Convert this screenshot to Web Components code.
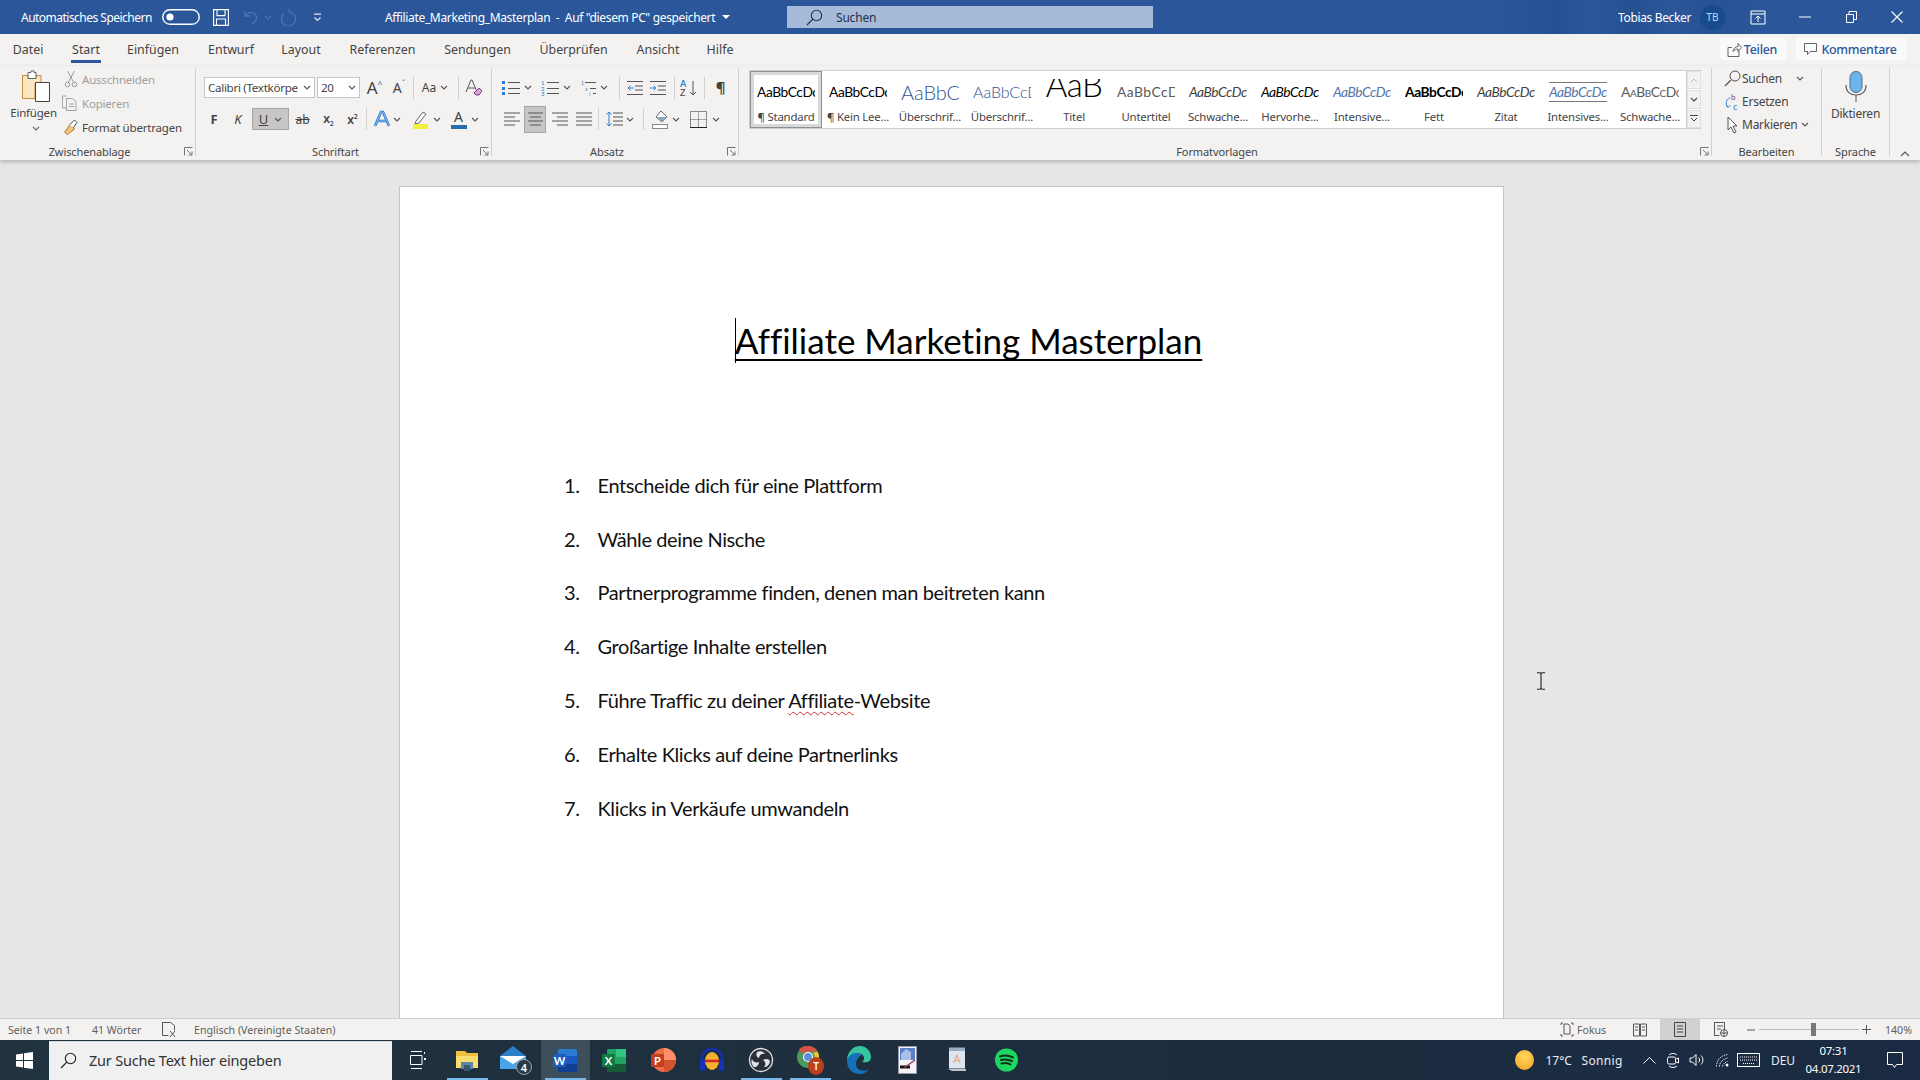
<!DOCTYPE html>
<html lang="de"><head><meta charset="utf-8"><title>Word</title>
<style>
html,body{margin:0;padding:0;width:1920px;height:1080px;overflow:hidden}
body{font-family:"Noto Sans","Open Sans",sans-serif;display:flex;flex-direction:column;background:#e6e6e6}
</style></head><body>
<w-titlebar></w-titlebar>
<w-tabs></w-tabs>
<w-ribbon></w-ribbon>
<w-doc></w-doc>
<w-status></w-status>
<w-taskbar></w-taskbar>
<script>
const UI='"Noto Sans","Open Sans",sans-serif', CAL='Lato,"Open Sans",sans-serif';
function def(tag,css,html){customElements.define(tag,class extends HTMLElement{constructor(){super();
 const h=typeof html==='function'?html(this):html;
 this.attachShadow({mode:'open'}).innerHTML=`<style>:host{display:block}${SH}${css}</style>${h}`;}});}
const SH=`.row{display:flex;align-items:center}.c{display:flex;align-items:center;justify-content:center;flex:none;white-space:nowrap}.l{display:flex;align-items:center;flex:none;white-space:nowrap}svg{display:block;flex:none}`;
function row(start,items,st=''){let p=start,o='';for(const it of items){const [x,w,h,k='c',e='']=it;o+=`<span class="${k}" style="margin-left:${x-p}px;width:${w}px;${e}">${h}</span>`;p=x+w;}return `<div class="row" style="${st}">${o}</div>`;}
const svg=(w,h,b,e='')=>`<svg width="${w}" height="${h}" viewBox="0 0 ${w} ${h}" fill="none" ${e}>${b}</svg>`;
const chev=(c='#555')=>svg(8,5,`<path d="M1 1l3 3 3-3" stroke="${c}" stroke-width="1.1"/>`);
const launcher=svg(9,9,`<path d="M.5 8.500v-8h8M3 3l5 5M4.500 8h3.500V4.500" stroke="#666" stroke-width=".9"/>`);

/* ---------- title bar ---------- */
def('w-titlebar',`:host{height:34px;background:linear-gradient(90deg,transparent 78%,rgba(10,40,90,.14) 81%,transparent 83%,rgba(10,40,90,.16) 85%,transparent 87%,rgba(10,40,90,.12) 89%,transparent 92%),#2b579a;color:#fff;font-size:12px;flex:none}
.row{height:34px}.s{height:22px;background:#a6bbd9;color:#1f2f4a;font-size:12px}
.av{height:25px;border-radius:50%;background:#174b8c;color:#c8d8ee;font-size:10px;letter-spacing:.3px}`,
row(0,[
[21,135,'Automatisches Speichern','l','letter-spacing:-.52px'],
[162,38,svg(38,16,`<rect x=".75" y=".75" width="36.5" height="14.5" rx="7.25" stroke="#fff" stroke-width="1.4"/><circle cx="8" cy="8" r="3.6" fill="#fff"/>`)],
[213,16,svg(16,17,`<path d="M.6.6h14.800v15.800H.6zM4 .6v6h8v-6M3.500 16.400V10h9v6.400" stroke="#fff" stroke-width="1.1"/>`)],
[242,17,svg(17,17,`<path d="M3 2v5h5M3.300 7C5 3.500 10 2 13 5c3 3 2 7-3 10" stroke="#4f74ad" stroke-width="1.3"/>`)],
[264,7,chev('#4f74ad')],
[280,17,svg(17,17,`<path d="M9 3a7 7 0 1 1-5 1.600M9 3V.6" stroke="#4f74ad" stroke-width="1.3"/>`)],
[313,9,svg(9,9,`<path d="M1 1.200h7M1.500 4.500l3 3 3-3" stroke="#dfe7f2" stroke-width="1.2"/>`)],
[385,333,'Affiliate_Marketing_Masterplan&nbsp; - &nbsp;Auf "diesem PC" gespeichert','l','letter-spacing:-.35px'],
[722,8,svg(8,4,`<path d="M0 0h8L4 4z" fill="#fff"/>`)],
[787,366,`<span style="margin-left:19px">${svg(17,17,`<circle cx="10.500" cy="6.500" r="5.200" stroke="#25324a" stroke-width="1.100"/><path d="M6.800 10.200L1 16" stroke="#25324a" stroke-width="1.200"/>`)}</span><span style="margin-left:13px;letter-spacing:-.2px">Suchen</span>`,'l s'],
[1618,72,'Tobias Becker','l','letter-spacing:-.35px'],
[1700,25,'TB','c av'],
[1750,16,svg(16,15,`<path d="M1 1h14v13H1zM1 4h14M8 12V6M5.500 8.500L8 6l2.500 2.500" stroke="#fff" stroke-width="1"/>`)],
[1799,12,svg(12,2,`<path d="M0 1h12" stroke="#fff"/>`)],
[1846,11,svg(11,12,`<path d="M.5 3.500h7v8h-7zM3 3.500V.5h7.500v8H7.500" stroke="#fff"/>`)],
[1891,12,svg(12,12,`<path d="M.5.5l11 11M11.500.5L.5 11.500" stroke="#fff" stroke-width="1.100"/>`)],
]));

/* ---------- tabs ---------- */
def('w-tabs',`:host{height:32px;background:#f3f2f1;color:#444;font-size:12.4px;flex:none}
.row{height:30px}.b{height:22px;background:#fafafa;color:#2b579a;font-weight:500;border-radius:2px;font-size:12.4px;letter-spacing:-.25px;padding-right:2px;box-sizing:border-box}
.u{position:relative;height:30px}.u::after{content:"";position:absolute;left:0;right:0;top:26px;height:2.500px;background:#2b579a}`,
row(0,[[13,30,'Datei'],[71,30,'Start','c u'],[128,50,'Einfügen'],[209,44,'Entwurf'],[282,38,'Layout'],[350,65,'Referenzen'],[445,65,'Sendungen'],[540,67,'Überprüfen'],[637,42,'Ansicht'],[707,26,'Hilfe'],
[1720,66,`${svg(15,15,`<path d="M1 5.500h4M1 5.500v9h11V9M6 9.500C6.500 6 9 4.500 11 4.500V1.500l3.500 4-3.500 4V7C9 7 7.500 8 6 9.500z" stroke="#555" stroke-width=".9"/>`,'style="margin-right:2px"')}Teilen`,'c b'],
[1796,111,`${svg(14,14,`<path d="M.5 1.500h12v8H6L3.500 12.500V9.500h-3z" stroke="#555" stroke-width=".9"/>`,'style="margin-right:3px"')}Kommentare`,'c b']]));

/* ---------- group ---------- */
customElements.define('w-group',class extends HTMLElement{constructor(){super();
 const L=this.getAttribute('label'),w=this.getAttribute('w'),la=this.hasAttribute('launcher');
 this.attachShadow({mode:'open'}).innerHTML=`<style>:host{display:block;flex:none;width:${w}px;height:88px;margin-top:2px;border-right:1px solid #d2d0ce;color:#444}
 .body{height:75px;display:flow-root}.lab{height:17px;display:flex;align-items:center;justify-content:center;font-size:11px;color:#444;padding-right:${la?16:0}px;letter-spacing:-.1px;position:relative}
 .la{position:absolute;right:2px;top:4px;display:block}svg{display:block}</style><div class="body"><slot></slot></div><div class="lab">${L}${la?`<span class="la">${launcher}</span>`:''}</div>`;}});

/* ---------- clipboard ---------- */
def('w-clipboard',`:host{font-size:11.5px;letter-spacing:-.2px}
.grid{display:flex}.paste{padding:2px 0 0 10px;display:flex;flex-direction:column;align-items:center;width:47px;font-size:11.5px}
.paste span{margin-top:2px;height:18px;line-height:18px;white-space:nowrap}.paste svg:first-child{margin-left:4px}
.col{margin:-1px 0 0 7px}.col .it{display:flex;align-items:center;height:24px;white-space:nowrap}.it svg{margin-right:4px}.d{color:#a19f9d}`,
`<div class="grid"><div class="paste">
${svg(30,32,`<path d="M1.500 5.500H7v3h8v-3h5v8h-6v15H1.500z" fill="#fbe6c4" stroke="#c88a3c"/><path d="M7 2.500h3V1h3v1.500h2v6H7z" fill="#fff" stroke="#666"/><path d="M14.500 12.500h14v19h-14z" fill="#fff" stroke="#444"/>`)}
<span>Einfügen</span><span style="margin-top:0;height:12px;display:flex;align-items:center">${chev('#666')}</span></div>
<div class="col">
<div class="it d">${svg(14,18,`<path d="M3.500 1l6 11M10.500 1l-6 11" stroke="#9a9a9a"/><circle cx="3.500" cy="14.500" r="2.300" stroke="#9a9a9a"/><circle cx="10.500" cy="14.500" r="2.300" stroke="#9a9a9a"/>`)}Ausschneiden</div>
<div class="it d"><span style="margin-left:-2px"></span>${svg(16,16,`<path d="M4.500 1h-4v12h4M4.500 3.500h6l3.500 3v9H4.500z" stroke="#a5a5a5"/><path d="M7 9h5M7 11.500h5" stroke="#a5a5a5"/>`)}Kopieren</div>
<div class="it"><span style="margin-left:-1px"></span>${svg(15,16,`<path d="M1.500 13l2-2 3-5 5 4-4 3-3 2.500z" fill="#f6c878" stroke="#a8703c"/><path d="M6.500 6l5-5 2.500 2.500-4 5.500" fill="#fff" stroke="#555"/>`)}Format übertragen</div>
</div></div>`);

/* ---------- font ---------- */
def('w-font',`:host{font-size:12px}
.r1{height:21px;margin-top:9px}.r2{height:22px;margin-top:10px}
.box{height:21px;box-sizing:border-box;background:#fff;border:1px solid #c8c6c4;justify-content:space-between;padding:0 3px;font-size:11.6px;letter-spacing:-.3px;overflow:hidden}
.sep{height:22px;background:#d2d0ce}.u{background:#c8c6c4;border:1px solid #a8a6a4;box-sizing:border-box;height:22px}`,
row(196,[
[204,111,`Calibri (Textkörpe ${chev()}`,'l box'],[317,43,`20 ${chev()}`,'l box'],
[367,15,`<span style="font-size:17px">A</span><sup style="font-size:8px;margin:-8px 0 0;color:#2b579a">^</sup>`],
[392,14,`<span style="font-size:14px">A</span><sup style="font-size:8px;margin:-8px 0 0;color:#2b7cd3">ˇ</sup>`],
[413,1,'','c sep'],[420,18,'Aa'],[440,8,chev()],[458,1,'','c sep'],
[465,17,svg(17,17,`<path d="M1 13L6 1h1l5 12M3 9h7" stroke="#555"/><path d="M9 14l5-5 3 3-3 4h-3z" fill="#d9a5d9" stroke="#8a3a8a"/>`)],
]).replace('class="row" style=""','class="row r1"')+
row(196,[
[208,12,`<b style="font-size:13px">F</b>`],[232,12,`<i style="font-size:13px">K</i>`],
[252,37,`<span style="text-decoration:underline;font-size:13px;margin-right:6px">U</span>${chev()}`,'c u'],
[295,15,`<span style="font-size:12px;text-decoration:line-through">ab</span>`],
[322,13,`<b style="font-size:12px;font-weight:600">x<sub style="font-size:7px;color:#2b579a">2</sub></b>`],
[346,13,`<b style="font-size:12px;font-weight:600">x<sup style="font-size:7px;line-height:0">2</sup></b>`],
[366,1,'','c sep'],
[373,18,svg(18,18,`<path d="M2 16L8 2h2l6 14M5 11h8" stroke="#2b7cd3" stroke-width="2.600"/><path d="M2 16L8 2h2l6 14M5 11h8" stroke="#cfe6f8" stroke-width=".6"/>`)],
[393,8,chev()],
[412,17,svg(17,20,`<path d="M4 12l7-9 3 2-7 9-4 1z" fill="#fff" stroke="#666"/><rect x="1" y="15" width="15" height="5" fill="#f5f03c"/>`)],
[433,8,chev()],
[450,17,`<span style="display:flex;flex-direction:column;align-items:center;line-height:14px;font-size:14px">A<span style="width:16px;height:4px;background:#2b6da8;margin-top:1px"></span></span>`],
[471,8,chev()],
]).replace('class="row" style=""','class="row r2"'));

/* ---------- paragraph ---------- */
const lines=(x,ys,w,c='#555')=>ys.map(y=>`<path d="M${x} ${y}h${w}" stroke="${c}"/>`).join('');
const blu='#2b7cd3';
const alignI=(pts)=>svg(17,15,pts.map(([x,y,w])=>`<path d="M${x} ${y}h${w}" stroke="#555"/>`).join(''));
def('w-para',`.r1{height:21px;margin-top:9px}.r2{height:22px;margin-top:10px}.sep{height:22px;background:#d2d0ce}.on{background:#c8c6c4;border:1px solid #a8a6a4;box-sizing:border-box;height:27px}`,
row(492,[
[502,18,svg(18,16,`<rect x="0" y="1" width="3" height="3" fill="${blu}"/><rect x="0" y="7" width="3" height="3" fill="${blu}"/><rect x="0" y="12" width="3" height="3" fill="${blu}"/>`+lines(6,[2.500,8.500,13.500],12))],[524,8,chev()],
[541,18,svg(18,16,`<g fill="${blu}" font-size="6" font-family="Lato"><text x="0" y="5">1</text><text x="0" y="11">2</text><text x="0" y="16">3</text></g>`+lines(6,[2.500,8.500,13.500],12))],[563,8,chev()],
[581,16,svg(16,16,`<g fill="${blu}" font-size="5" font-family="Lato"><text x="0" y="5">1</text><text x="4" y="11">a</text><text x="8" y="16">i</text></g>`+`<path d="M4 2.500h11M9 8.500h6M12 13.500h3" stroke="#555"/>`)],[600,8,chev()],
[619,1,'','c sep'],
[627,16,svg(16,14,lines(0,[.5,13.5],16)+lines(8,[5,9],8)+`<path d="M7 7H1M3.500 4.500L1 7l2.500 2.500" stroke="${blu}"/>`)],
[650,16,svg(16,14,lines(0,[.5,13.5],16)+lines(8,[5,9],8)+`<path d="M0 7h6M3.500 4.500L6 7 3.500 9.500" stroke="${blu}"/>`)],
[674,1,'','c sep'],
[680,18,`<span style="display:flex;align-items:center">${svg(9,18,`<text x="0" y="8" font-size="9" font-weight="700" fill="${blu}" font-family="Lato">A</text><text x="0" y="17" font-size="9" fill="#444" font-family="Lato">Z</text>`)}${svg(9,18,`<path d="M4 2v14M1 13l3 3 3-3" stroke="#555"/>`)}</span>`],
[704,1,'','c sep'],
[715,11,`<span style="font-size:15px;font-weight:700;color:#444;line-height:15px">¶</span>`],
]).replace('class="row" style=""','class="row r1"')+
row(492,[
[504,17,alignI([[0,1,16],[0,5,11],[0,9,16],[0,13,11]])],
[524,22,alignI([[1,1,15],[3,5,11],[1,9,15],[3,13,11]]),'c on'],
[552,17,alignI([[0,1,16],[5,5,11],[0,9,16],[5,13,11]])],
[576,17,alignI([[0,1,16],[0,5,16],[0,9,16],[0,13,16]])],
[598,1,'','c sep'],
[606,17,svg(17,16,`<path d="M3 1v14M.5 3.500L3 1l2.500 2.500M.5 12.500L3 15l2.500-2.500" stroke="${blu}"/>`+lines(7,[2,6,10,14],10))],[626,8,chev()],
[643,1,'','c sep'],
[652,18,svg(18,19,`<path d="M9 1l6 6-5 5-6-5z" fill="#fff" stroke="#666"/><path d="M4 7l6 5 5-5" fill="#8ab"/><rect x=".5" y="14.500" width="15" height="4" fill="#fff" stroke="#888"/>`)],[672,8,chev()],
[690,17,svg(17,17,`<path d="M.5.5h16v16H.5z" stroke="#222" stroke-dasharray="1 1"/><path d="M8.500.5v16M.5 8.500h16" stroke="#555" stroke-dasharray="1 1"/><path d="M0 16.500h17" stroke="#222"/>`)],[712,8,chev()],
]).replace('class="row" style=""','class="row r2"'));

/* ---------- styles ---------- */
customElements.define('w-style',class extends HTMLElement{constructor(){super();
 const L=this.getAttribute('label'),t=this.getAttribute('t')||'AaBbCcDc',st=this.getAttribute('s')||'';
 this.attachShadow({mode:'open'}).innerHTML=`<style>:host{display:block;flex:none;width:72px;height:57px;box-sizing:border-box;padding-top:8px;font-family:${CAL}}
 :host([sel]){box-shadow:inset 0 0 0 1px #8f8f8f,inset 0 0 0 4px #d9d9d9}
 .p{width:58px;height:26px;margin:0 auto;overflow:hidden;white-space:nowrap;line-height:26px;color:#000;font-size:13.8px;letter-spacing:-.45px;text-align:left;font-variant-ligatures:none;${st}}
 .lab{height:23px;display:flex;align-items:center;justify-content:center;font:11.4px ${UI};letter-spacing:-.2px;color:#444;white-space:nowrap}</style>
 <div class="p">${t}</div><div class="lab">${L}</div>`;}});
def('w-styles',`.g{margin:2px 0 0 10px;width:950px;height:57px;display:flex;background:#fff;border:1px solid #d2d0ce}
.sc{width:14px;flex:none;display:flex;flex-direction:column;gap:1px;background:#fff;border-left:1px solid #d2d0ce}.sc span{flex:1;background:#f3f2f1;display:flex;align-items:center;justify-content:center;border:1px solid #e1dfdd}`,
`<div class="g">
<w-style sel label="¶ Standard"></w-style>
<w-style label="¶ Kein Lee..."></w-style>
<w-style label="Überschrif..." t="AaBbCc" s="font-size:20px;font-weight:300;color:#2f5496;letter-spacing:-.1px"></w-style>
<w-style label="Überschrif..." t="AaBbCcD" s="font-size:16px;font-weight:300;color:#2f5496;letter-spacing:-.1px"></w-style>
<w-style label="Titel" t="AaB" s="font-size:33px;font-weight:300;line-height:10px;text-align:center;letter-spacing:-.6px"></w-style>
<w-style label="Untertitel" t="AaBbCcD" s="color:#595959;letter-spacing:.5px"></w-style>
<w-style label="Schwache..." t="AaBbCcDc" s="font-style:italic;color:#404040"></w-style>
<w-style label="Hervorhe..." t="AaBbCcDc" s="font-style:italic"></w-style>
<w-style label="Intensive..." t="AaBbCcDc" s="font-style:italic;color:#4f75a8"></w-style>
<w-style label="Fett" t="AaBbCcDc" s="font-weight:700"></w-style>
<w-style label="Zitat" t="AaBbCcDc" s="font-style:italic;color:#404040"></w-style>
<w-style label="Intensives..." t="AaBbCcDc" s="font-style:italic;color:#4f75a8;box-shadow:inset 0 1px #777,inset 0 -1px #777;height:20px;line-height:20px;margin-top:3px;margin-bottom:3px"></w-style>
<w-style label="Schwache..." t="AaBbCcDc" s="font-variant:small-caps;color:#595959"></w-style>
<div class="sc"><span>${svg(8,5,`<path d="M1 4l3-3 3 3" stroke="#bbb"/>`)}</span><span>${chev('#444')}</span><span>${svg(8,7,`<path d="M0 .5h8M1 3l3 3 3-3" stroke="#444"/>`)}</span></div>
</div>`);

/* ---------- editing / voice ---------- */
def('w-edit',`:host{font-size:12px}.it{display:flex;align-items:center;height:23px;white-space:nowrap;letter-spacing:-.25px}.w{margin-top:-1px;padding:0 0 0 12px}.it svg:first-child{margin-right:1px}`,
`<div class="w"><div class="it">${svg(17,18,`<circle cx="11" cy="6" r="5" stroke="#555"/><path d="M7 10l-6 6" stroke="#555" stroke-width="1.300"/>`)}Suchen<span style="margin-left:14px">${chev()}</span></div>
<div class="it">${svg(17,18,`<text x="7" y="7" font-size="8" fill="#8a3a8a" font-family="Lato">b</text><text x="9" y="17" font-size="9" fill="${blu}" font-family="Lato">c</text><path d="M6 5C2 6 1 11 4 14M2 12l2 2.500 2-2" stroke="${blu}"/>`)}Ersetzen</div>
<div class="it"><span style="margin-left:2px"></span>${svg(15,18,`<path d="M2 1v13l3-3 3 6 2-1-3-6h4z" stroke="#555" fill="#fff"/>`,'style="margin-right:1px"')}Markieren<span style="margin-left:3px">${chev()}</span></div></div>`);
def('w-voice',`:host{font-size:12px;text-align:center}.w{display:flex;flex-direction:column;align-items:center;padding-top:3px;letter-spacing:-.25px}span{margin-top:3px}`,
`<div class="w">${svg(22,31,`<rect x="5" y=".5" width="12" height="21" rx="6" fill="#6cb4ea" stroke="#4a6a8a"/><path d="M1 14c0 7 4 10 10 10s10-3 10-10" stroke="#666" stroke-width="1.200"/><path d="M11 24v7" stroke="#666" stroke-width="1.200"/>`)}<span>Diktieren</span></div>`);

def('w-ribbon',`:host{height:94px;background:#f3f2f1;box-shadow:0 2px 4px rgba(0,0,0,.22);position:relative;z-index:2;flex:none}
.r{display:flex;height:94px}.x{flex:1;display:flex;align-items:flex-end;justify-content:center;padding-bottom:3px;box-sizing:border-box}`,
`<div class="r">
<w-group label="Zwischenablage" w="195" launcher><w-clipboard></w-clipboard></w-group>
<w-group label="Schriftart" w="295" launcher><w-font></w-font></w-group>
<w-group label="Absatz" w="246" launcher><w-para></w-para></w-group>
<w-group label="Formatvorlagen" w="972" launcher><w-styles></w-styles></w-group>
<w-group label="Bearbeiten" w="109"><w-edit></w-edit></w-group>
<w-group label="Sprache" w="67"><w-voice></w-voice></w-group>
<div class="x">${svg(10,6,`<path d="M1 5l4-4 4 4" stroke="#555" stroke-width="1.100"/>`)}</div></div>`);

/* ---------- document ---------- */
def('w-doc',`:host{flex:1;min-height:0;overflow:hidden;padding:26px 0 0 399px;position:relative;background:#e6e6e6;font-family:${CAL};color:#000;font-variant-ligatures:none}
.page{width:1103px;height:900px;background:#fff;border:1px solid #c6c6c6}
.ti{padding:131px 0 0 34px;text-align:center;height:45px}
.ti span{display:inline-block;position:relative;font-size:35px;line-height:45px;text-decoration:underline;text-decoration-thickness:2px;text-underline-offset:5px;text-decoration-skip-ink:none}
.ti span::before{content:"";position:absolute;left:0;top:0;height:45px;width:1px;background:#000}
ol{list-style:none;margin:95px 0 0;padding:0 0 0 164px}
li{display:flex;height:53.8px;align-items:center;font-size:20px;letter-spacing:-.38px;color:#111}
li b{font-weight:400;width:33.500px;flex:none}
.sp{text-decoration:underline wavy #d03030 1px;text-underline-offset:3px}
.cur{position:absolute;left:1536px;top:512px}`,
`<div class="page"><div class="ti"><span>Affiliate Marketing Masterplan</span></div>
<ol><li><b>1.</b>Entscheide dich für eine Plattform</li><li><b>2.</b>Wähle deine Nische</li><li><b>3.</b>Partnerprogramme finden, denen man beitreten kann</li><li><b>4.</b>Großartige Inhalte erstellen</li><li><b>5.</b><span>Führe Traffic zu deiner <span class="sp">Affiliate</span>-Website</span></li><li><b>6.</b>Erhalte Klicks auf deine Partnerlinks</li><li><b>7.</b>Klicks in Verkäufe umwandeln</li></ol></div>
<span class="cur">${svg(10,18,`<path d="M1 .7h3l1 1 1-1h3M5 1.700v14.600M1 17.300h3l1-1 1 1h3" stroke="#222" stroke-width="1.100"/>`)}</span>`);

/* ---------- status ---------- */
def('w-status',`:host{height:22px;background:#f3f2f1;color:#605e5c;font-size:10.6px;flex:none;border-top:1px solid #cfcfcf;box-sizing:border-box}
.row{height:21px}.on{background:#d2d0ce;height:21px}`,
row(0,[[8,66,'Seite 1 von 1','l'],[92,52,'41 Wörter','l'],
[162,14,svg(14,16,`<path d="M.5.500h8l4 3v5M.5.500v13h6M8 9l5 6M13 9l-5 6" stroke="#555"/>`)],
[194,148,'Englisch (Vereinigte Staaten)','l'],
[1560,14,svg(14,15,`<path d="M1 3V1h2M11 1h2v2M1 12v2h2M11 14h2v-2M4 2h4l2 2v8H4z" stroke="#555"/>`)],[1577,32,'Fokus','l'],
[1633,14,svg(14,14,`<path d="M.5 1h6v12h-6zM7.500 1h6v12h-6zM2 4h3M2 7h3M9 4h3M9 7h3" stroke="#555"/>`)],
[1660,40,svg(12,15,`<path d="M.5.500h11v14H.5zM3 4h6M3 7h6M3 10h6" stroke="#444"/>`),'c on'],
[1714,14,svg(14,15,`<path d="M.5.500h10v7M.5.500v13h5M3 4h6M3 7h4" stroke="#555"/><circle cx="10" cy="11" r="3.500" stroke="#555"/><path d="M6.500 11h7M10 7.500v7" stroke="#555"/>`)],
[1746,9,svg(8,2,`<path d="M0 1h8" stroke="#555"/>`)],
[1759,100,`<span style="position:relative;display:block;width:100px;height:1px;background:#bbb"><span style="position:absolute;left:52px;top:-6px;width:5px;height:13px;background:#777"></span></span>`],
[1862,9,svg(9,9,`<path d="M0 4.500h9M4.500 0v9" stroke="#555"/>`)],
[1885,28,'140%','l']]));

/* ---------- taskbar ---------- */
const tI={
explorer:svg(24,24,`<path d="M1 3h9l2 2h11v15H1z" fill="#f0c040"/><path d="M1 8h22v12H1z" fill="#fbdc70"/><rect x="6" y="14" width="12" height="7" fill="#5a86a8"/><rect x="9" y="17" width="6" height="6" fill="#38566e"/>`),
mail:`<span style="position:relative;display:block;width:32px;height:30px">${svg(26,26,`<path d="M0 11L13 1l13 10v13H0z" fill="#2d7fc8"/><path d="M0 11h26v13H0z" fill="#49a5e8"/><path d="M0 11l13 8 13-8" fill="#fff"/>`,'style="position:absolute;left:0;top:0"')}<span style="position:absolute;right:0;bottom:0;width:16px;height:16px;border-radius:50%;background:#2a3a45;border:1px solid #9aa7b0;color:#fff;font-size:11px;font-weight:600;line-height:15px;text-align:center;box-sizing:border-box">4</span></span>`,
word:svg(26,26,`<rect x="6" y="2" width="19" height="23" rx="1.500" fill="#2b7cd3"/><rect x="6" y="9" width="19" height="8" fill="#185abd"/><rect x="6" y="17" width="19" height="8" fill="#103f91"/><rect x="1" y="7" width="13" height="13" rx="1" fill="#1b5ebe"/><text x="7.500" y="17.500" text-anchor="middle" font-size="11" font-weight="700" fill="#fff" font-family="Lato">W</text>`),
excel:svg(26,26,`<rect x="6" y="2" width="19" height="23" rx="1.500" fill="#21a366"/><rect x="15" y="2" width="10" height="8" fill="#33c481"/><rect x="6" y="17" width="19" height="8" fill="#185c37"/><rect x="1" y="7" width="13" height="13" rx="1" fill="#107c41"/><text x="7.500" y="17.500" text-anchor="middle" font-size="11" font-weight="700" fill="#fff" font-family="Lato">X</text>`),
ppt:svg(26,26,`<circle cx="14" cy="13" r="12" fill="#ed6c47"/><path d="M14 1a12 12 0 0 1 12 12H14z" fill="#ff8f6b"/><path d="M14 25a12 12 0 0 0 12-12H14z" fill="#d35230"/><rect x="1" y="7" width="13" height="13" rx="1" fill="#c43e1c"/><text x="7.500" y="17.500" text-anchor="middle" font-size="11" font-weight="700" fill="#fff" font-family="Lato">P</text>`),
aud:svg(26,28,`<path d="M3 18V13a10 10 0 0 1 20 0v5" stroke="#1430a8" stroke-width="2.500"/><rect x="1" y="13" width="5" height="12" rx="2" fill="#1430b8"/><rect x="20" y="13" width="5" height="12" rx="2" fill="#1430b8"/><ellipse cx="13" cy="15" rx="7" ry="9" fill="#f0b030"/><path d="M6 15h14" stroke="#d0281c" stroke-width="2.500"/>`),
obs:svg(26,26,`<circle cx="13" cy="13" r="11.500" fill="#2a2e35" stroke="#dfe3e8" stroke-width="1.300"/><g fill="#dfe3e8"><path d="M9 5c4-2 7 0 8 2-3-1-6 1-6 4-3-1-3-4-2-6z"/><path d="M22 14c-.500 4-3 6-6 6 2-2 2-5-1-7 3-2 6-1 7 1z"/><path d="M6 20c-3-3-3-6-2-8 1 3 4 4 7 3 0 3-3 6-5 5z"/></g>`),
chrome:`<span style="position:relative;display:block;width:28px;height:30px">${svg(26,26,`<circle cx="12" cy="12" r="11" fill="#4c9a5a"/><path d="M12 1a11 11 0 0 1 9.500 5.500H12a5.500 5.500 0 0 0-5 3L3 4a11 11 0 0 1 9-3z" fill="#d8503f"/><path d="M21.500 6.500A11 11 0 0 1 13 23l4-7a5.500 5.500 0 0 0 0-8z" fill="#f1c232"/><circle cx="12" cy="12" r="4.500" fill="#5b8fdc" stroke="#fff" stroke-width="1.200"/>`,'style="position:absolute;left:0;top:0"')}<span style="position:absolute;right:0;bottom:0;width:16px;height:18px;border-radius:50%;background:#b8401e;color:#fff;font-size:10px;font-weight:600;line-height:18px;text-align:center">T</span></span>`,
edge:svg(26,30,`<path d="M1 16C1 7 7 1 14 1c7 0 11 6 11 11 0 5-5 6-9 5 3-2 3-6-1-8C9 7 3 10 1 16z" fill="#36c4a0"/><path d="M1 16c0 8 6 13 12 13 5 0 8-2 10-5-5 3-13 2-13-5 0-4 3-7 6-10C8 6 2 10 1 16z" fill="#1570b8"/>`),
tool:svg(20,28,`<rect x=".5" y=".5" width="18" height="27" fill="#f4f4f8" stroke="#99a"/><rect x="2" y="2" width="15" height="12" fill="#5a80c8"/><path d="M3 8l5-5 5 3v8H3z" fill="#a8c0e8"/><path d="M2 21h10" stroke="#111" stroke-width="3"/><path d="M6 22l11-8" stroke="#8a3a50" stroke-width="1.300"/>`),
pad:svg(18,26,`<rect x="1" y=".5" width="16" height="3" fill="#98b0c8"/><rect x="1" y="3.500" width="16" height="18" fill="#dde6f0"/><text x="9" y="16" text-anchor="middle" font-size="11" fill="#e0a070" font-family="Lato">A</text><path d="M0 22l4 2h14v-2z" fill="#b8c4d0"/>`),
spotify:svg(23,24,`<circle cx="11.500" cy="12" r="11.500" fill="#1ed760"/><path d="M5 8.500c4-1.300 9-1 13 1M6 12c3.500-1 7.500-.7 11 1M6.500 15.500c3-.8 6-.5 9 .8" stroke="#11331e" stroke-width="2" stroke-linecap="round"/>`)};
const cell=(k,on)=>`<div class="t ${on?'on':''}">${k}</div>`;
const S='stroke="#fff"';
def('w-taskbar',`:host{height:40px;background:linear-gradient(90deg,#20333f,#1d2d3e 60%,#1a2a42);color:#fff;flex:none}
.b{display:flex;height:40px;align-items:center}
.se{width:343px;height:39px;margin-top:1px;background:#f0f0f0;color:#333;font-size:14.500px;display:flex;align-items:center;flex:none;letter-spacing:-.2px;box-sizing:border-box;padding:0 0 2px 11px;border-top:1px solid #d8d8d8}
.se svg{margin-right:12px}
.t{width:49px;height:40px;display:flex;align-items:center;justify-content:center;flex:none;position:relative}
.t.on{background:#3c4f5a}.t.u::after{content:"";position:absolute;left:4px;right:4px;bottom:0;height:2px;background:#76b9ed}
.tr{font-size:12px;color:#e8eef4}
.tm{display:flex;flex-direction:column;align-items:center;font-size:11.500px;line-height:18px;letter-spacing:-.3px}`,
`<div class="b"><div style="width:49px;flex:none;display:flex;justify-content:center">${svg(17,17,`<path d="M0 2.500L7 1.500V8H0zM8 1.300L17 0v8H8zM0 9h7v6.500L0 14.500zM8 9h9v8L8 15.700z" fill="#fff"/>`)}</div>
<div class="se">${svg(17,17,`<circle cx="10.500" cy="6.500" r="5.200" stroke="#222" stroke-width="1.100"/><path d="M6.800 10.200L1 16" stroke="#222" stroke-width="1.200"/>`)}Zur Suche Text hier eingeben</div>
<span style="width:1.500px;flex:none"></span>
${cell(svg(16,18,`<path d="M1 .5h11M1 17.500h11M.5 4.500h11.500v9H.5z" ${S}/><rect x="14" y="7" width="2" height="2" fill="#fff"/><rect x="14" y="1" width="1" height="2" fill="#fff"/>`))}
<div class="t u">${tI.explorer}</div>${cell(tI.mail)}<div class="t on u">${tI.word}</div>${cell(tI.excel)}${cell(tI.ppt)}${cell(tI.aud)}<div class="t u">${tI.obs}</div><div class="t u">${tI.chrome}</div>${cell(tI.edge)}${cell(tI.tool)}${cell(tI.pad)}${cell(tI.spotify)}
${row(1031,[
[1515,20,`<span style="display:block;width:19px;height:20px;border-radius:50%;background:radial-gradient(circle at 50% 35%,#ffd860,#f0a020)"></span>`],
[1546,32,'17°C','l tr'],[1582,44,'Sonnig','l tr','letter-spacing:.35px'],
[1643,13,svg(13,8,`<path d="M.5 7.500L6.500 1.500l6 6" ${S}/>`)],
[1667,12,svg(12,17,`<path d="M2 3c2-2 6-2 8 0M2 14c2 2 6 2 8 0" ${S}/><rect x=".5" y="5" width="8" height="7" rx="1.500" ${S}/><path d="M9 7l2.500-1v5L9 10" ${S}/>`)],
[1689,16,svg(16,14,`<path d="M1 5h2.500L7 1.500v11L3.500 9H1zM9.500 4.500c1.500 1.500 1.500 3.500 0 5M12 2.500c2.500 2.500 2.500 6.500 0 9" ${S}/>`)],
[1716,13,svg(13,13,`<path d="M.5 12.500C.5 6 5 1.500 11.500.5M3.500 12.500c0-4 3-7 8-8.500M6.500 12.500c0-2 2-4 5-5" stroke="#dde" stroke-dasharray="1.500 .8"/><circle cx="11" cy="11" r="1.500" fill="#fff"/>`)],
[1737,23,svg(23,14,`<rect x=".5" y=".5" width="22" height="13" ${S}/><path d="M3 4h17M3 7h17M6 10.500h11" ${S} stroke-dasharray="1 1"/>`)],
[1772,23,'DEU','c tr'],
[1806,56,`<span class="tm"><span>07:31</span><span>04.07.2021</span></span>`],
[1887,16,svg(16,16,`<path d="M.5.500h15v12H9.500L7.500 15.500 5.500 12.500h-5z" ${S}/>`)],
],'height:40px')}
</div>`);
</script>
</body></html>
